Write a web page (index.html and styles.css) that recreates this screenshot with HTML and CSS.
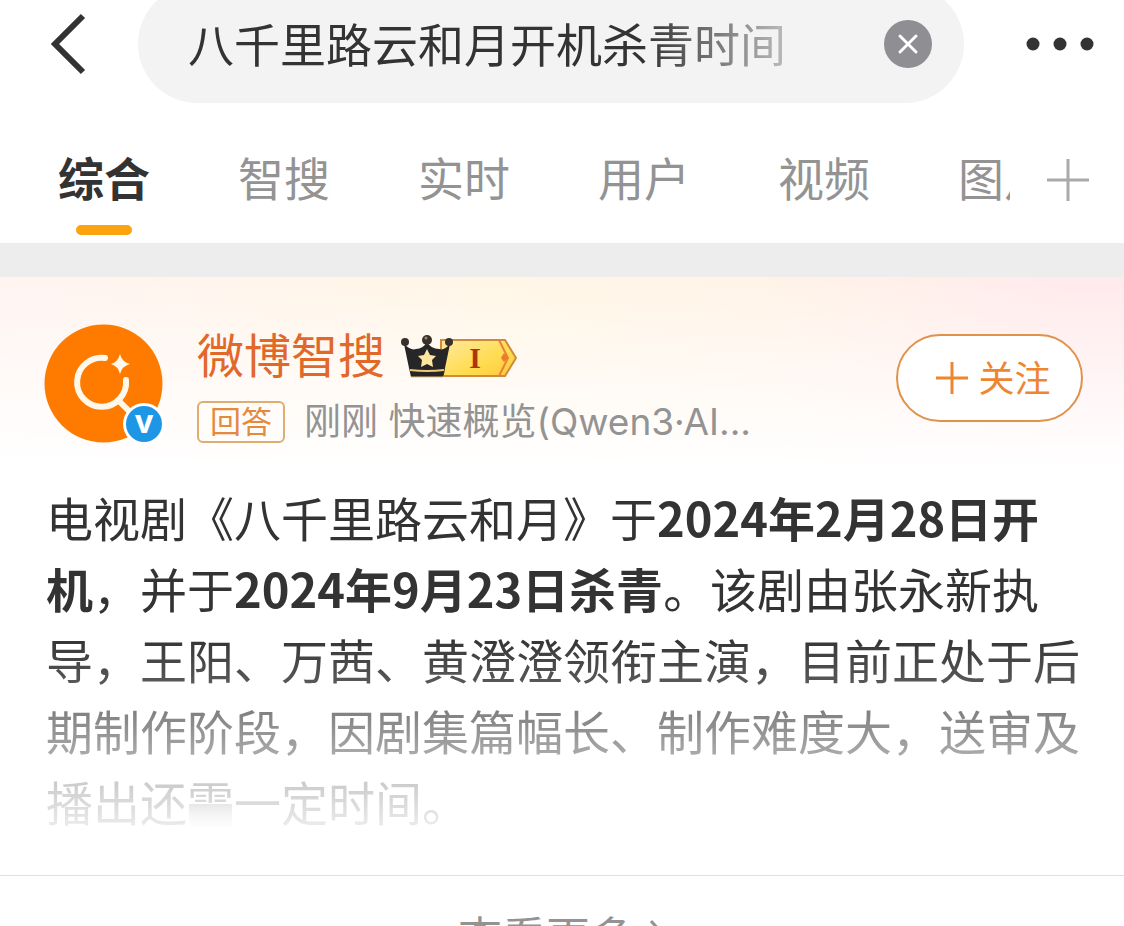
FILE: index.html
```html
<!DOCTYPE html>
<html lang="zh-CN">
	<head>
		<meta charset="utf-8">
		<meta name="viewport" content="width=device-width, initial-scale=1">
		<title>八千里路云和月开机杀青时间</title>
		<link rel="stylesheet" href="styles.css">
	</head>
	<body>

		<!-- 搜索栏 -->
		<header class="searchBar">
			<button type="button" class="iconBtn backBtn" aria-label="返回">
				<svg width="36" height="62" viewBox="0 0 36 62"><path d="M33 3 L5 31 L33 59" fill="none" stroke="#333" stroke-width="6"/></svg>
			</button>
			<div class="searchBox">
				<input type="text" class="searchInput" aria-label="搜索" value="八千里路云和月开机杀青时间">
				<button type="button" class="iconBtn" aria-label="清空">
					<svg width="48" height="48" viewBox="0 0 48 48"><circle cx="24" cy="24" r="24" fill="#8e8e93"/><path d="M16 16 L32 32 M32 16 L16 32" stroke="#fff" stroke-width="3" stroke-linecap="round"/></svg>
				</button>
			</div>
			<button type="button" class="iconBtn moreBtn" aria-label="更多">
				<svg width="68" height="14" viewBox="0 0 68 14" fill="#333"><circle cx="7" cy="7" r="6.5"/><circle cx="34" cy="7" r="6.5"/><circle cx="61" cy="7" r="6.5"/></svg>
			</button>
		</header>

		<!-- 分类 -->
		<nav class="tabBar">
			<div class="tabList">
				<a href="#" class="tab active">综合</a>
				<a href="#" class="tab">智搜</a>
				<a href="#" class="tab">实时</a>
				<a href="#" class="tab">用户</a>
				<a href="#" class="tab">视频</a>
				<a href="#" class="tab">图片</a>
			</div>
			<button type="button" class="iconBtn addBtn" aria-label="添加">
				<svg width="42" height="42" viewBox="0 0 42 42"><path d="M0 21 H42 M21 0 V42" stroke="#aaa" stroke-width="3"/></svg>
			</button>
		</nav>

		<main class="card">
			<div class="cardHead">
				<div class="avatar">
					<svg width="119" height="119" viewBox="0 0 119 119">
						<circle cx="59.5" cy="59.5" r="59" fill="#ff7b00"/>
						<path d="M61 34 A24.500 24.500 0 1 0 82 56" fill="none" stroke="#fff8ea" stroke-width="6" stroke-linecap="round"/>
						<path d="M74 76 L88 90" stroke="#fff8ea" stroke-width="6"/>
						<path d="M76 30 Q78 38 86 40 Q78 42 76 50 Q74 42 67 40 Q74 38 76 30Z" fill="#fff8ea"/>
						<circle cx="100" cy="100" r="21" fill="#fff"/>
						<circle cx="100" cy="100" r="18" fill="#1e96e6"/>
						<text x="100" y="109" class="vMark">v</text>
					</svg>
				</div>
				<div class="userInfo">
					<div class="nameRow">
						<a href="#" class="userName">微博智搜</a>
						<svg class="levelIcon" width="118" height="44" viewBox="0 0 118 44">
							<defs>
								<linearGradient id="gold" x1="0" y1="0" x2="1" y2="1">
									<stop offset="0" stop-color="#ffe9a0"/>
									<stop offset="0.6" stop-color="#ffdc50"/>
									<stop offset="1" stop-color="#ffc83c"/>
								</linearGradient>
							</defs>
							<path d="M40 5 H104 L115 23 L104 41 H40Z" fill="url(#gold)" stroke="#cf8a3c" stroke-width="2"/>
							<path d="M98 5 L107 23 L98 41" fill="none" stroke="#e8823a" stroke-width="2"/>
							<path d="M103 18 L107 23 L103 27 L100 23Z" fill="#ee7a2c"/>
							<text x="74" y="33" class="levelNum">I</text>
							<path d="M3 9 Q10 16 15 14 Q22 14 26 7 Q30 14 38 14 Q43 16 49 9 L44 33 Q43 42 41 42 H10 L8 33Z" fill="#262628"/>
							<path d="M9 35 Q26 37 43 35" fill="none" stroke="#f0c878" stroke-width="2"/>
							<path d="M10 42 H42" fill="none" stroke="#e8bc6c" stroke-width="1"/>
							<circle cx="4" cy="7" r="4" fill="#39302a"/>
							<circle cx="26" cy="5" r="5" fill="#39302a"/>
							<circle cx="48" cy="7" r="4" fill="#39302a"/>
							<circle cx="25" cy="3" r="1.500" fill="#9a8a74"/>
							<path d="M26 14 L29 20 L35 21 L31 25 L32 32 L26 29 L20 32 L21 25 L17 21 L23 20Z" fill="#ffe6a0"/>
						</svg>
					</div>
					<div class="metaRow">
						<span class="tag">回答</span>
						<span class="meta">刚刚 快速概览(Qwen3·AI...</span>
					</div>
				</div>
				<button type="button" class="followBtn">
					<svg width="32" height="32" viewBox="0 0 32 32"><path d="M0 16 H32 M16 0 V32" stroke="#ee8630" stroke-width="3"/></svg>
					<span>关注</span>
				</button>
			</div>

			<p class="answer">电视剧《八千里路云和月》于<strong>2024年2月28日开机</strong>，并于<strong>2024年9月23日杀青</strong>。该剧由张永新执导，王阳、万茜、黄澄澄领衔主演，目前正处于后期制作阶段，因剧集篇幅长、制作难度大，送审及播出还<span class="smudge">需</span>一定时间。</p>

			<a href="#" class="moreLink">
				<span>查看更多</span>
				<svg width="16" height="36" viewBox="0 0 16 36"><path d="M1 4 L14 18 L1 32" fill="none" stroke="#939393" stroke-width="3"/></svg>
			</a>
		</main>

	</body>
</html>
```

FILE: styles.css
```css
* {
	margin: 0;
	padding: 0;
	box-sizing: border-box;
}

body {
	height: 100vh;
	overflow: hidden;
	background: #fff;
	color: #333;
	font-family: "Noto Sans CJK SC", sans-serif;
}

a {
	color: inherit;
	text-decoration: none;
}

svg {
	display: block;
}

.iconBtn {
	flex: none;
	border: none;
	background: none;
	cursor: pointer;
}

/* 搜索栏 */
.searchBar {
	display: flex;
	align-items: center;
	height: 118px;
	margin-top: -15px;
	padding: 0 30px 0 50px;
}

.backBtn {
	margin-right: 52px;
}

.moreBtn {
	margin-left: 62px;
}

.searchBox {
	flex: 1;
	display: flex;
	align-items: center;
	justify-content: space-between;
	min-width: 0;
	height: 100%;
	padding: 0 32px 0 50px;
	border-radius: 59px;
	background: #f3f3f3;
}

.searchInput {
	flex: 1;
	min-width: 0;
	height: 76px;
	margin-right: 80px;
	padding-bottom: 4px;
	border: none;
	outline: none;
	background: none;
	color: #333;
	font-family: inherit;
	font-size: 46px;
	-webkit-mask-image: linear-gradient(to right, #000 74%, rgba(0, 0, 0, 0.2));
	mask-image: linear-gradient(to right, #000 74%, rgba(0, 0, 0, 0.2));
}

/* 分类 */
.tabBar {
	display: flex;
	align-items: flex-start;
	height: 140px;
	padding: 38px 35px 0 58px;
}

.tabList {
	flex: 1;
	display: flex;
	gap: 88px;
	overflow: hidden;
}

.tab {
	flex: none;
	color: #939393;
	font-size: 46px;
	line-height: 70px;
}

.tab.active {
	color: #333;
	font-weight: bold;
}

.tab.active::after {
	content: "";
	display: block;
	width: 56px;
	height: 10px;
	margin: 14px auto 0;
	border-radius: 5px;
	background: #fca311;
}

.addBtn {
	height: 78px;
	margin-left: 37px;
}

/* 回答卡片 */
.card {
	padding-top: 47px;
	border-top: 34px solid #ededed;
	background: linear-gradient(to bottom, rgba(255, 255, 255, 0), #fff 190px), linear-gradient(to right, #fff4f1, #fff6e6 45%, #fff3e8 70%, #ffeaec 95%);
	background-clip: padding-box;
}

.cardHead {
	display: flex;
	align-items: flex-start;
	padding: 0 41px 0 44px;
}

.avatar {
	flex: none;
	margin-right: 34px;
}

.vMark {
	fill: #fff;
	font-family: "Open Sans", sans-serif;
	font-size: 32px;
	font-weight: bold;
	text-anchor: middle;
}

.userInfo {
	flex: 1;
	min-width: 0;
}

.nameRow,
.metaRow {
	display: flex;
	align-items: center;
}

.userName {
	color: #e2682a;
	font-size: 47px;
	line-height: 58px;
}

.levelIcon {
	margin: 8px 0 0 16px;
}

.levelNum {
	fill: #b0350c;
	font-family: "Liberation Serif", serif;
	font-size: 30px;
	font-weight: bold;
	text-anchor: middle;
}

.metaRow {
	height: 42px;
	margin-top: 19px;
}

.tag {
	width: 88px;
	height: 42px;
	margin-right: 19px;
	border: 2px solid #e0ac70;
	border-radius: 6px;
	color: #e58a3c;
	font-size: 31px;
	line-height: 34px;
	text-align: center;
}

.meta {
	color: #939393;
	font-family: Inter, "Noto Sans CJK SC", sans-serif;
	font-size: 37px;
	line-height: 42px;
	white-space: nowrap;
}

.followBtn {
	flex: none;
	display: flex;
	align-items: center;
	justify-content: center;
	gap: 10px;
	width: 187px;
	height: 88px;
	margin-top: 10px;
	padding-left: 8px;
	border: 2px solid #e0914a;
	border-radius: 44px;
	background: #fff;
	color: #ee8630;
	font-family: inherit;
	font-size: 36px;
	cursor: pointer;
}

.followBtn span {
	padding-bottom: 4px;
}

.answer {
	margin: 38px 42px 39px 46px;
	font-size: 47px;
	line-height: 71px;
	-webkit-mask-image: linear-gradient(to bottom, #000 44%, rgba(0, 0, 0, 0.8) 58%, rgba(0, 0, 0, 0.62) 65%, rgba(0, 0, 0, 0.42) 77%, rgba(0, 0, 0, 0.25) 85%, rgba(0, 0, 0, 0.1) 97%);
	mask-image: linear-gradient(to bottom, #000 44%, rgba(0, 0, 0, 0.8) 58%, rgba(0, 0, 0, 0.62) 65%, rgba(0, 0, 0, 0.42) 77%, rgba(0, 0, 0, 0.25) 85%, rgba(0, 0, 0, 0.1) 97%);
}

/* 下半截糊掉的字 */
.smudge {
	position: relative;
}

.smudge::after {
	content: "";
	position: absolute;
	left: 2px;
	right: 2px;
	bottom: 6px;
	height: 25px;
	background: linear-gradient(to bottom, #777, #fff);
}

.moreLink {
	display: flex;
	align-items: center;
	justify-content: center;
	gap: 16px;
	padding-top: 26px;
	border-top: 1px solid #e0e0e0;
	color: #939393;
	font-size: 44px;
	line-height: 66px;
}
```
